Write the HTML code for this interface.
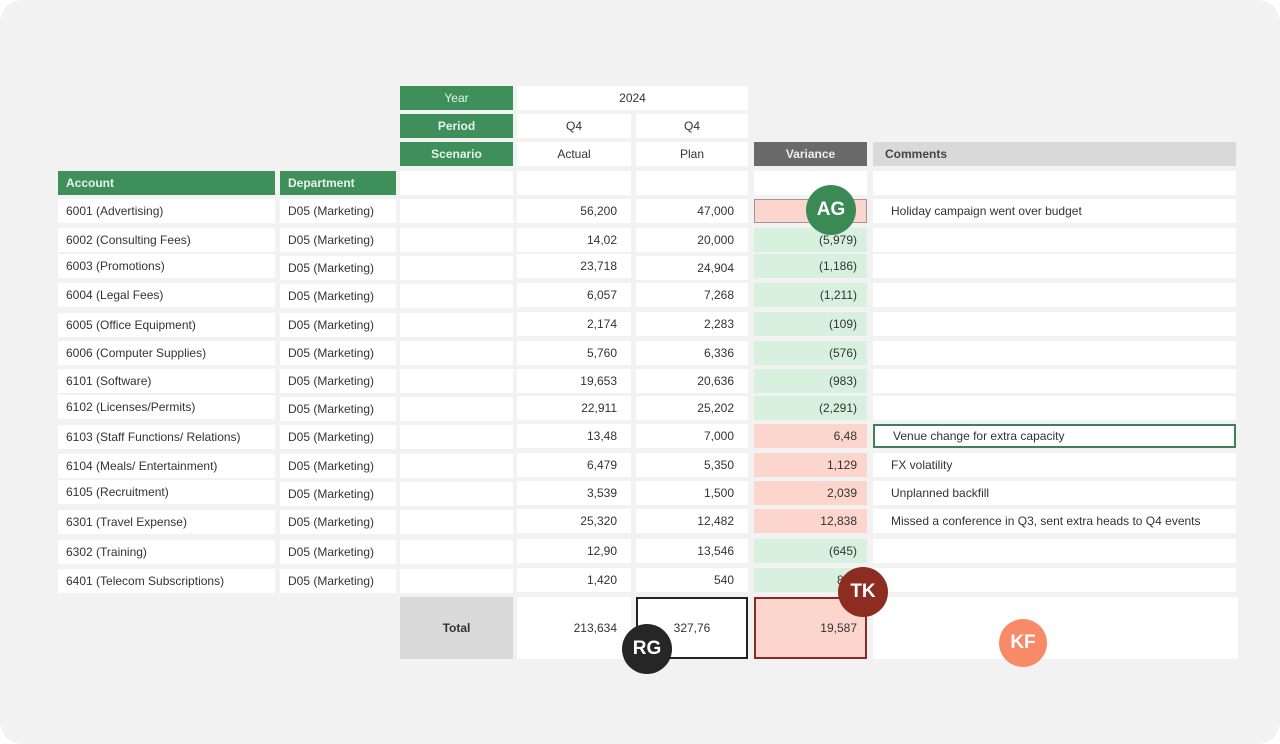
<!DOCTYPE html>
<html><head><meta charset="utf-8"><style>
*{margin:0;padding:0;box-sizing:border-box}
html,body{width:1280px;height:744px;overflow:hidden;background:#fff}
body{font-family:"Liberation Sans",sans-serif;font-size:12px;color:#333}
.panel{position:absolute;left:0;top:0;width:1280px;height:744px;background:#f2f2f2;border-radius:22px}
.c{position:absolute;height:24px;line-height:24px;background:#fff;white-space:nowrap;overflow:visible}
.l{padding-left:8px}.r{text-align:right;padding-right:14px}.m{text-align:center}
.g{background:#3f8f5a;color:#e8f3ea;font-weight:bold}
.a{left:58px;width:217px}.d{left:280px;width:116px}.b{left:400px;width:113px}
.ac{left:517px;width:114px}.p{left:636px;width:112px}.v{left:754px;width:113px;padding-right:10px;text-align:right}
.cm{left:873px;width:363px;padding-left:18px}
.red{background:#fcd6cc}.grn{background:#d8f1df}
.av{position:absolute;border-radius:50%;color:#fff;font-weight:bold;text-align:center;font-size:19px}
</style></head><body>
<div class="panel"></div>

<div class="c g m" style="left:400px;width:113px;top:86px;font-weight:normal">Year</div>
<div class="c m" style="left:517px;width:231px;top:86px">2024</div>
<div class="c g m" style="left:400px;width:113px;top:114px">Period</div>
<div class="c m ac" style="top:114px">Q4</div>
<div class="c m p" style="top:114px">Q4</div>
<div class="c g m" style="left:400px;width:113px;top:142px">Scenario</div>
<div class="c m ac" style="top:142px">Actual</div>
<div class="c m p" style="top:142px">Plan</div>
<div class="c m" style="left:754px;width:113px;top:142px;background:#6a6a6a;color:#eee;font-weight:bold">Variance</div>
<div class="c" style="left:873px;width:363px;top:142px;background:#d9d9d9;font-weight:bold;padding-left:12px;color:#444">Comments</div>

<div class="c g a l" style="top:171px">Account</div>
<div class="c g d l" style="top:171px">Department</div>
<div class="c b" style="top:171px"></div><div class="c ac" style="top:171px"></div><div class="c p" style="top:171px"></div><div class="c" style="left:754px;width:113px;top:171px"></div><div class="c cm" style="top:171px"></div>

<!-- rows -->
<div class="c a l" style="top:199px">6001 (Advertising)</div><div class="c d l" style="top:199px">D05 (Marketing)</div><div class="c b" style="top:199px"></div><div class="c ac r" style="top:199px">56,200</div><div class="c p r" style="top:199px">47,000</div><div class="c v red" style="top:199px;border:1px solid #999">9,200</div><div class="c cm" style="top:199px">Holiday campaign went over budget</div>

<div class="c a l" style="top:228px">6002 (Consulting Fees)</div><div class="c d l" style="top:228px">D05 (Marketing)</div><div class="c b" style="top:228px"></div><div class="c ac r" style="top:228px">14,02</div><div class="c p r" style="top:228px">20,000</div><div class="c v grn" style="top:228px">(5,979)</div><div class="c cm" style="top:228px"></div>

<div class="c a l" style="top:254px">6003 (Promotions)</div><div class="c d l" style="top:256px">D05 (Marketing)</div><div class="c b" style="top:256px"></div><div class="c ac r" style="top:254px">23,718</div><div class="c p r" style="top:256px">24,904</div><div class="c v grn" style="top:254px">(1,186)</div><div class="c cm" style="top:254px"></div>

<div class="c a l" style="top:283px">6004 (Legal Fees)</div><div class="c d l" style="top:284px">D05 (Marketing)</div><div class="c b" style="top:284px"></div><div class="c ac r" style="top:283px">6,057</div><div class="c p r" style="top:283px">7,268</div><div class="c v grn" style="top:283px">(1,211)</div><div class="c cm" style="top:283px"></div>

<div class="c a l" style="top:313px">6005 (Office Equipment)</div><div class="c d l" style="top:313px">D05 (Marketing)</div><div class="c b" style="top:313px"></div><div class="c ac r" style="top:312px">2,174</div><div class="c p r" style="top:312px">2,283</div><div class="c v grn" style="top:312px">(109)</div><div class="c cm" style="top:312px"></div>

<div class="c a l" style="top:341px">6006 (Computer Supplies)</div><div class="c d l" style="top:341px">D05 (Marketing)</div><div class="c b" style="top:341px"></div><div class="c ac r" style="top:341px">5,760</div><div class="c p r" style="top:341px">6,336</div><div class="c v grn" style="top:341px">(576)</div><div class="c cm" style="top:341px"></div>

<div class="c a l" style="top:369px">6101 (Software)</div><div class="c d l" style="top:369px">D05 (Marketing)</div><div class="c b" style="top:369px"></div><div class="c ac r" style="top:369px">19,653</div><div class="c p r" style="top:369px">20,636</div><div class="c v grn" style="top:369px">(983)</div><div class="c cm" style="top:369px"></div>

<div class="c a l" style="top:395px">6102 (Licenses/Permits)</div><div class="c d l" style="top:397px">D05 (Marketing)</div><div class="c b" style="top:397px"></div><div class="c ac r" style="top:396px">22,911</div><div class="c p r" style="top:396px">25,202</div><div class="c v grn" style="top:396px">(2,291)</div><div class="c cm" style="top:396px"></div>

<div class="c a l" style="top:425px">6103 (Staff Functions/ Relations)</div><div class="c d l" style="top:425px">D05 (Marketing)</div><div class="c b" style="top:425px"></div><div class="c ac r" style="top:424px">13,48</div><div class="c p r" style="top:424px">7,000</div><div class="c v red" style="top:424px">6,48</div><div class="c cm" style="top:424px;border:2px solid #3f7f5a;line-height:20px">Venue change for extra capacity</div>

<div class="c a l" style="top:454px">6104 (Meals/ Entertainment)</div><div class="c d l" style="top:454px">D05 (Marketing)</div><div class="c b" style="top:454px"></div><div class="c ac r" style="top:453px">6,479</div><div class="c p r" style="top:453px">5,350</div><div class="c v red" style="top:453px">1,129</div><div class="c cm" style="top:453px">FX volatility</div>

<div class="c a l" style="top:480px">6105 (Recruitment)</div><div class="c d l" style="top:482px">D05 (Marketing)</div><div class="c b" style="top:482px"></div><div class="c ac r" style="top:481px">3,539</div><div class="c p r" style="top:481px">1,500</div><div class="c v red" style="top:481px">2,039</div><div class="c cm" style="top:481px">Unplanned backfill</div>

<div class="c a l" style="top:510px">6301 (Travel Expense)</div><div class="c d l" style="top:510px">D05 (Marketing)</div><div class="c b" style="top:510px"></div><div class="c ac r" style="top:509px">25,320</div><div class="c p r" style="top:509px">12,482</div><div class="c v red" style="top:509px">12,838</div><div class="c cm" style="top:509px">Missed a conference in Q3, sent extra heads to Q4 events</div>

<div class="c a l" style="top:540px">6302 (Training)</div><div class="c d l" style="top:540px">D05 (Marketing)</div><div class="c b" style="top:540px"></div><div class="c ac r" style="top:539px">12,90</div><div class="c p r" style="top:539px">13,546</div><div class="c v grn" style="top:539px">(645)</div><div class="c cm" style="top:539px"></div>

<div class="c a l" style="top:569px">6401 (Telecom Subscriptions)</div><div class="c d l" style="top:569px">D05 (Marketing)</div><div class="c b" style="top:569px"></div><div class="c ac r" style="top:568px">1,420</div><div class="c p r" style="top:568px">540</div><div class="c v grn" style="top:568px">880</div><div class="c cm" style="top:568px"></div>

<!-- total -->
<div class="c m" style="left:400px;width:113px;top:597px;height:62px;line-height:62px;background:#d9d9d9;font-weight:bold">Total</div>
<div class="c r" style="left:517px;width:114px;top:597px;height:62px;line-height:62px">213,634</div>
<div class="c" style="left:636px;width:112px;top:597px;height:62px;line-height:58px;border:2px solid #222;text-align:center">327,76</div>
<div class="c" style="left:754px;width:113px;top:597px;height:62px;line-height:58px;border:2px solid #8b2a22;background:#fcd6cc;text-align:right;padding-right:8px">19,587</div>
<div class="c" style="left:873px;width:365px;top:597px;height:62px"></div>

<div class="av" style="left:806px;top:185px;width:50px;height:50px;line-height:50px;background:#3b8a55">AG</div>
<div class="av" style="left:838px;top:567px;width:50px;height:50px;line-height:50px;background:#8d2d22">TK</div>
<div class="av" style="left:622px;top:624px;width:50px;height:50px;line-height:50px;background:#262626">RG</div>
<div class="av" style="left:999px;top:619px;width:48px;height:48px;line-height:48px;background:#f98a68">KF</div>
</body></html>
